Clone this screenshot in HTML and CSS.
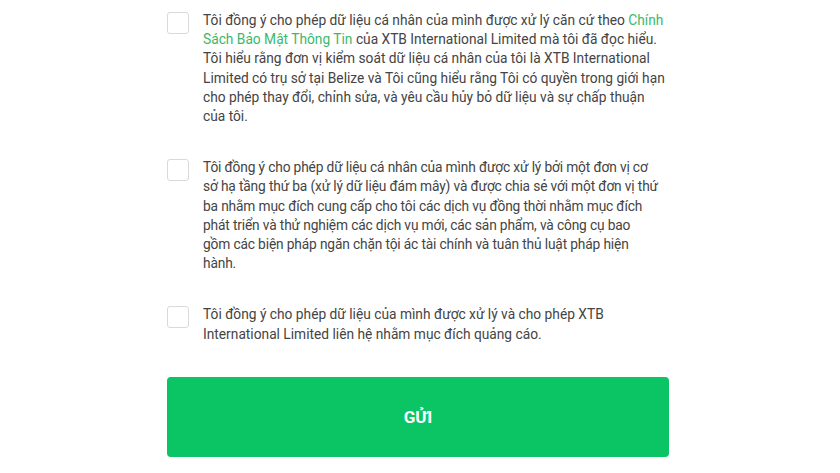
FILE: index.html
```html
<!DOCTYPE html>
<html lang="vi">
<head>
<meta charset="utf-8">
<link rel="stylesheet" href="styles.css">
</head>
<body>
<form class="consent-form">
  <label class="consent">
    <span class="box"></span>
    <span class="text">Tôi đồng ý cho phép dữ liệu cá nhân của mình được xử lý căn cứ theo <a class="link" href="#">Chính Sách Bảo Mật Thông Tin</a> của XTB International Limited mà tôi đã đọc hiểu. Tôi hiểu rằng đơn vị kiểm soát dữ liệu cá nhân của tôi là XTB International Limited có trụ sở tại Belize và Tôi cũng hiểu rằng Tôi có quyền trong giới hạn cho phép thay đổi, chỉnh sửa, và yêu cầu hủy bỏ dữ liệu và sự chấp thuận của tôi.</span>
  </label>
  <label class="consent">
    <span class="box"></span>
    <span class="text text-tight">Tôi đồng ý cho phép dữ liệu cá nhân của mình được xử lý bởi một đơn vị cơ sở hạ tầng thứ ba (xử lý dữ liệu đám mây) và được chia sẻ với một đơn vị thứ ba nhằm mục đích cung cấp cho tôi các dịch vụ đồng thời nhằm mục đích phát triển và thử nghiệm các dịch vụ mới, các sản phẩm, và công cụ bao gồm các biện pháp ngăn chặn tội ác tài chính và tuân thủ luật pháp hiện hành.</span>
  </label>
  <label class="consent">
    <span class="box"></span>
    <span class="text">Tôi đồng ý cho phép dữ liệu của mình được xử lý và cho phép XTB International Limited liên hệ nhằm mục đích quảng cáo.</span>
  </label>
  <button class="submit" type="button">GỬI</button>
</form>
</body>
</html>
```
FILE: styles.css
```css
html, body {
  margin: 0;
  padding: 0;
  background: #ffffff;
}
body {
  font-family: Roboto, "Liberation Sans", sans-serif;
  color: #444444;
}
.consent-form {
  width: 502px;
  margin-left: 167px;
  padding-top: 12px;
  display: flex;
  flex-direction: column;
}
.consent {
  display: flex;
  align-items: flex-start;
  gap: 14px;
  margin-bottom: 33px;
}
.box {
  flex: none;
  width: 20px;
  height: 20px;
  border: 1px solid #d9d9d9;
  border-radius: 3px;
  background: #fff;
}
.text {
  width: 462px;
  font-size: 13.75px;
  line-height: 19.2px;
  margin-top: -1px;
}
.text-tight {
  width: 455px;
  letter-spacing: -0.15px;
}
.link {
  color: #3cb96a;
  text-decoration: none;
}
.submit {
  margin-top: 0;
  height: 80px;
  border: none;
  border-radius: 4px;
  background: #0bc464;
  color: #ffffff;
  font-family: Roboto, "Liberation Sans", sans-serif;
  font-weight: 700;
  font-size: 17px;
}
```
